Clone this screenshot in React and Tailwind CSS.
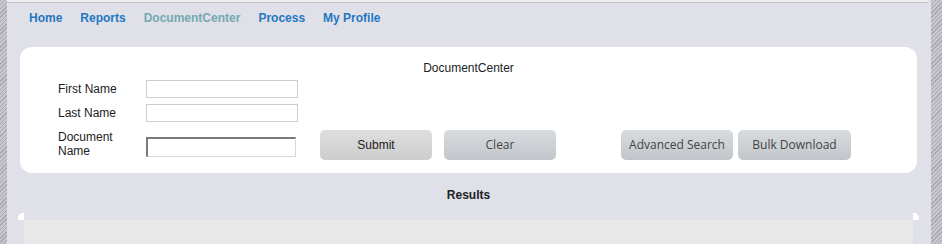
export default function App() {
  const hatch =
    'bg-[repeating-linear-gradient(135deg,#a9a9b0_0px,#a9a9b0_1px,#c6c6cc_1px,#c6c6cc_3px)]'

  const navItems = [
    { label: 'Home', active: false },
    { label: 'Reports', active: false },
    { label: 'DocumentCenter', active: true },
    { label: 'Process', active: false },
    { label: 'My Profile', active: false },
  ]

  return (
    <div className="w-[942px] h-[244px] flex overflow-hidden font-['Liberation_Sans',Arial,sans-serif]">
      {/* left hatched edge */}
      <div className={`w-[7px] shrink-0 ${hatch}`} />

      <div className="flex-1 flex flex-col bg-[#e0e0e8]">
        <div className="h-[2px] bg-[#ededf0]" />
        <div className="h-px bg-[#c4c4c8]" />

        {/* nav */}
        <nav className="flex gap-[18px] pl-[22px] pt-[8px] h-[44px] text-[12px] font-bold leading-[15px]">
          {navItems.map(({ label, active }) => (
            <a key={label} className={active ? 'text-[#73a9b2]' : 'text-[#1f78c0]'}>
              {label}
            </a>
          ))}
        </nav>

        {/* search card */}
        <div className="ml-[13px] w-[897px] h-[126px] bg-white rounded-[12px] pt-[13px] text-[12px] text-[#222]">
          <p className="text-center leading-[16px]">DocumentCenter</p>

          <div className="pl-[38px] mt-[4px]">
            <div className="flex items-center h-[18px]">
              <label className="w-[88px]">First Name</label>
              <input className="w-[152px] h-[18px] border border-[#cdcdcd] bg-white" />
            </div>
            <div className="flex items-center h-[18px] mt-[6px]">
              <label className="w-[88px]">Last Name</label>
              <input className="w-[152px] h-[18px] border border-[#cdcdcd] bg-white" />
            </div>

            <div className="flex items-center h-[30px] mt-[8px]">
              <label className="w-[88px] leading-[14px] pr-[20px] -mt-[2px]">Document Name</label>
              <input className="w-[150px] h-[20px] border border-[#d8d8d8] border-t-2 border-l-2 border-t-[#7a7a7a] border-l-[#7a7a7a] bg-white mt-[4px]" />

              <button className="ml-[24px] w-[112px] h-[30px] rounded-[5px] bg-gradient-to-b from-[#dedede] to-[#cdcdcd] text-[12px] text-[#222]">
                Submit
              </button>
              <button className="ml-[12px] w-[112px] h-[30px] rounded-[5px] bg-gradient-to-b from-[#d8dcdf] to-[#c2c6cb] font-['Open_Sans',sans-serif] text-[12px] text-[#444]">
                Clear
              </button>

              <button className="ml-[65px] w-[112px] h-[30px] rounded-[5px] bg-gradient-to-b from-[#d8dcdf] to-[#c2c6cb] font-['Open_Sans',sans-serif] text-[12px] text-[#444]">
                Advanced Search
              </button>
              <button className="ml-[5px] w-[113px] h-[30px] rounded-[5px] bg-gradient-to-b from-[#d8dcdf] to-[#c2c6cb] font-['Open_Sans',sans-serif] text-[12px] text-[#444]">
                Bulk Download
              </button>
            </div>
          </div>
        </div>

        {/* results */}
        <p className="text-center text-[12px] font-bold text-[#222] leading-[14px] mt-[15px] pl-[2px]">
          Results
        </p>

        <div className="ml-[11px] w-[901px] mt-[11px] flex-1 flex flex-col">
          <div className="flex justify-between">
            <div className="w-[6px] h-[7px] bg-white rounded-tl-[5px]" />
            <div className="w-[6px] h-[7px] bg-white rounded-tr-[5px]" />
          </div>
          <div className="mx-[6px] flex-1 bg-[#e8e8e8]" />
        </div>
      </div>

      {/* right hatched edge */}
      <div className="w-[14px] shrink-0 flex">
        <div className="w-[3px] bg-[#e0e0e8]" />
        <div className={`flex-1 ${hatch}`} />
      </div>
    </div>
  )
}
